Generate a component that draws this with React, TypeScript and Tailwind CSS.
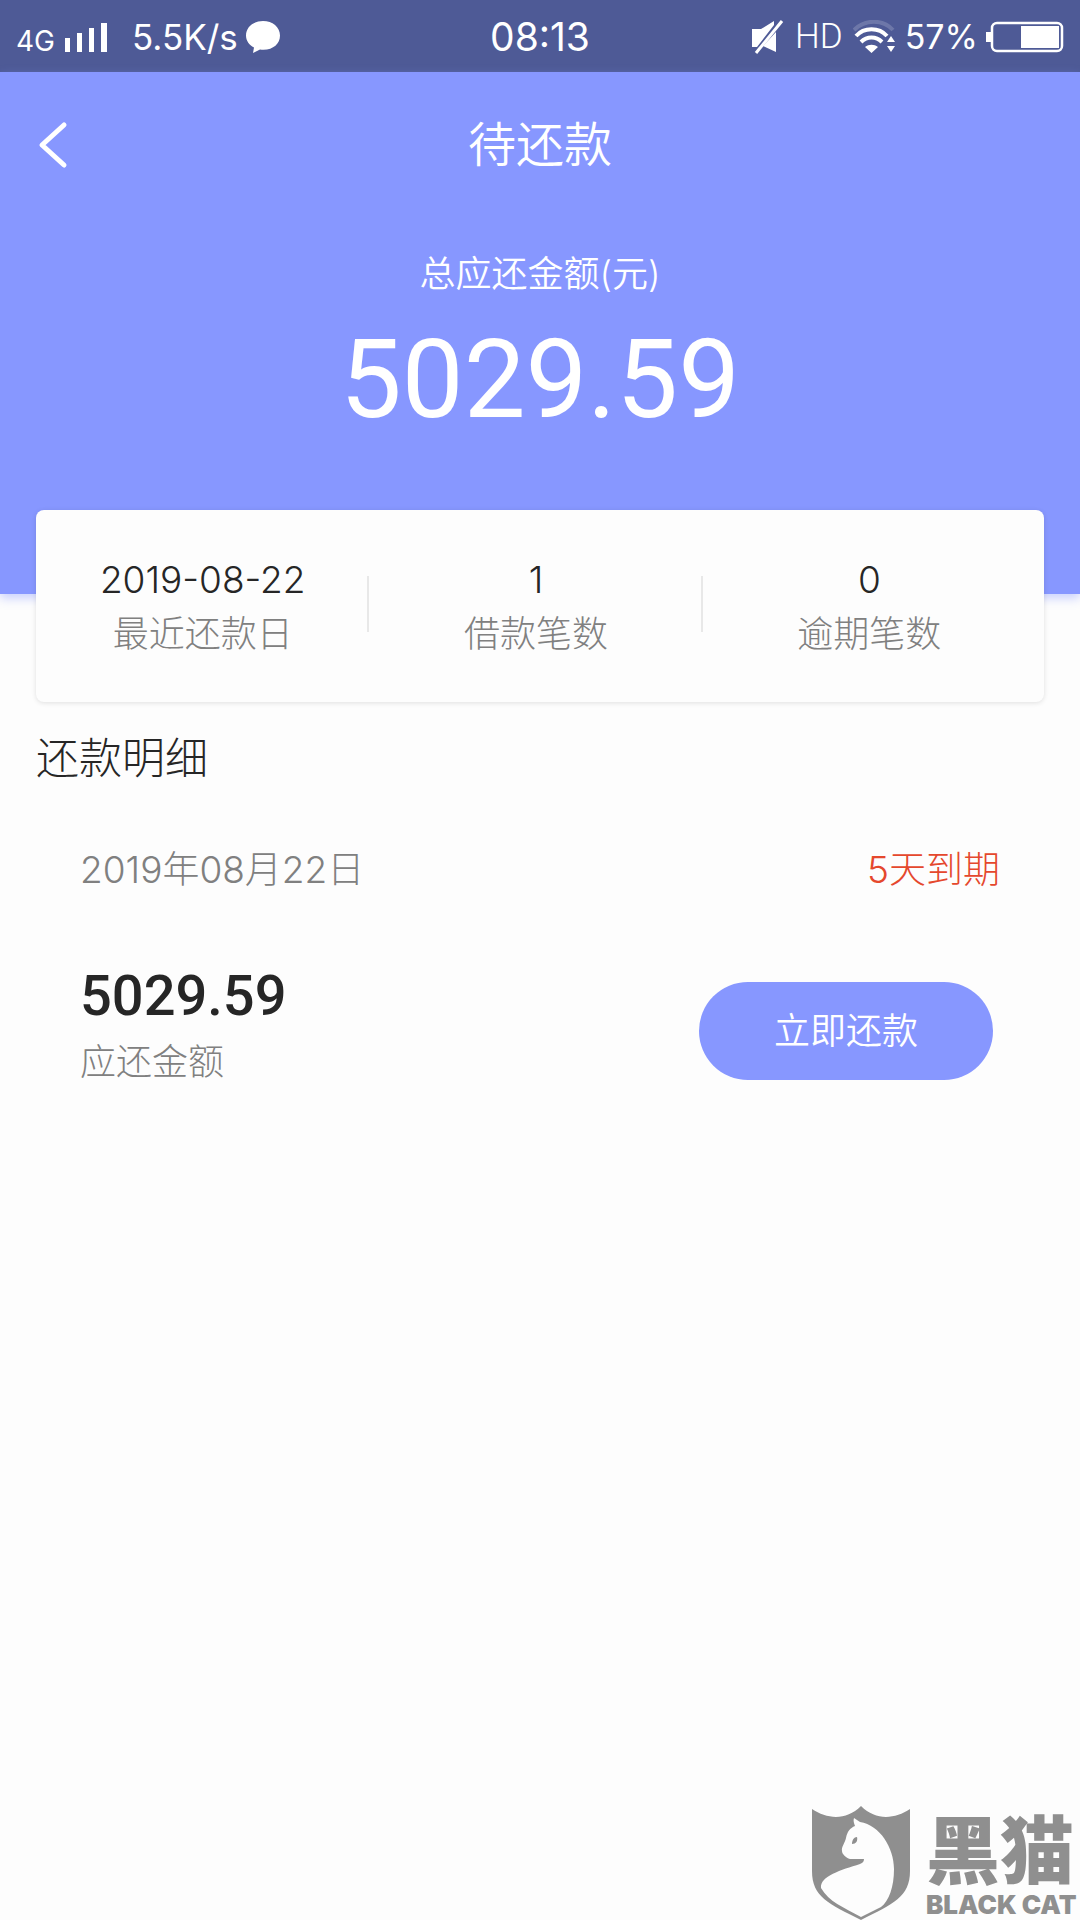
type Summary = { value: string; label: string };

const SUMMARY: Summary[] = [
  { value: "2019-08-22", label: "最近还款日" },
  { value: "1", label: "借款笔数" },
  { value: "0", label: "逾期笔数" },
];

export default function App() {
  return (
    <div className="flex min-h-screen flex-col bg-[#fdfdfd] font-['Inter','Noto_Sans_CJK_SC',sans-serif] font-light text-[#262626]">
      <StatusBar />
      <header className="h-[522px] bg-[#8797ff] font-[350] text-white shadow-[0_4px_10px_rgba(135,151,255,0.45)]">
        <nav className="grid grid-cols-[1fr_auto_1fr] items-center px-9 pt-10">
          <button type="button" aria-label="返回" className="w-12 py-2">
            <svg viewBox="0 0 32 50" className="h-[50px] w-8" fill="none" stroke="currentColor" strokeWidth="5" strokeLinecap="round" strokeLinejoin="round">
              <path d="M28 5 6 25l22 20" />
            </svg>
          </button>
          <h1 className="text-5xl leading-[64px]">待还款</h1>
        </nav>
        <p className="mt-[70px] text-center text-4xl leading-[52px]">总应还金额(元)</p>
        <p className="mt-6 text-center font-['Roboto',sans-serif] text-[110px] leading-[112px] font-normal">
          5029.59
        </p>
      </header>

      <main className="-mt-[84px]">
        <section className="mx-9 flex h-48 items-center rounded-lg bg-[#fdfdfd] pr-2 shadow-[0_1px_5px_rgba(0,0,0,0.12)]">
          {SUMMARY.map((s) => (
            <SummaryItem key={s.label} {...s} />
          ))}
        </section>

        <h2 className="mt-6 px-9 text-[43px] leading-[64px]">还款明细</h2>

        <section className="px-20 pt-[54px]">
          <div className="flex items-center justify-between text-[37px] leading-[52px]">
            <time dateTime="2019-08-22" className="text-[#808080]">
              2019年08月22日
            </time>
            <span className="text-[#e5482d]">5天到期</span>
          </div>
          <div className="mt-16 flex items-end justify-between pr-[7px]">
            <div>
              <p className="font-['Roboto',sans-serif] text-[56px] leading-[72px] font-medium">5029.59</p>
              <p className="mt-1 text-4xl leading-[52px] text-[#808080]">应还金额</p>
            </div>
            <button
              type="button"
              className="mb-2 h-[98px] w-[294px] rounded-full bg-[#8797ff] text-4xl font-[350] text-white"
            >
              立即还款
            </button>
          </div>
        </section>
      </main>

      <Watermark />
    </div>
  );
}

function SummaryItem({ value, label }: Summary) {
  return (
    <div className="relative flex-1 text-center after:absolute after:top-6 after:right-0 after:h-14 after:w-0.5 after:bg-[#e8e8e8] last:after:hidden">
      <p className="text-[37px] leading-[56px]">{value}</p>
      <p className="text-4xl leading-[52px] text-[#808080]">{label}</p>
    </div>
  );
}

function StatusBar() {
  return (
    <div className="grid h-[72px] grid-cols-[1fr_auto_1fr] items-center bg-[#4e5a96] px-4 pt-0.5 text-[35px] leading-[40px] font-normal text-white">
      <div className="flex items-center">
        <span className="pt-2 text-[28px] leading-8">4G</span>
        <svg viewBox="0 0 43 32" className="ml-2.5 h-8 w-[43px]" fill="currentColor">
          <path d="M0 17h5v14H0zM12 12h5v19h-5zM24 7h5v24h-5zM36 2h6v29h-6z" />
        </svg>
        <span className="ml-6">5.5K/s</span>
        <svg viewBox="0 0 34 32" className="ml-2 h-8 w-[34px]" fill="currentColor">
          <path d="M17 0C7.500 0 0 6 0 14.500c0 5 3 9.500 8 12L7 32l7-3.500c12 1.500 20-5 20-14C34 6 26.500 0 17 0z" />
        </svg>
      </div>
      <span className="text-[39px]">08:13</span>
      <div className="flex items-center justify-end">
        <svg viewBox="0 0 34 34" className="h-[34px] w-[34px]" fill="currentColor">
          <path d="M1 9h9L23 1v4L6 27H1z" />
          <path d="M25 12v20l-13-6z" />
          <path d="M31 1 5 33" stroke="currentColor" strokeWidth="3" />
        </svg>
        <span className="ml-2.5 font-['Roboto',sans-serif] font-light">HD</span>
        <svg viewBox="0 0 44 34" className="ml-2.5 h-[34px] w-11" fill="none" stroke="currentColor">
          <path d="M1 10C12-1 30-1 40 10" strokeWidth="4" opacity=".18" />
          <path d="M3 16c8-9 23-9 31 0M8 22c6-6 15-6 21 0" strokeWidth="4" />
          <path d="m12 27 6.500 6 6.500-6c-4-3-9-3-13 0zM34 22l4-6 4 6zM34 26h8l-4 6z" fill="currentColor" stroke="none" />
        </svg>
        <span className="ml-2 text-[34px]">57%</span>
        <svg viewBox="0 0 78 32" className="ml-2 h-8 w-[78px]" fill="none" stroke="currentColor">
          <rect x="6" y="2" width="70" height="28" rx="5" strokeWidth="2.500" />
          <path d="M2.500 11v10" strokeWidth="5" />
          <path d="M35 5h38v22H35z" fill="currentColor" stroke="none" />
        </svg>
      </div>
    </div>
  );
}

function Watermark() {
  return (
    <footer className="mt-auto flex items-end justify-end gap-4 text-[#8f8f8f]">
      <svg viewBox="0 0 98 114" className="h-[114px] w-[98px]" fill="currentColor">
        <path d="M0 3c15 10 34 12 49-3 15 15 34 13 49 3v62c0 26-17 33-49 49C17 98 0 91 0 65z" />
        <path
          fill="#fdfdfd"
          d="M42 12l6 4C68 19 82 42 82 63c0 18-5 32-13 38l-20 10C31 101 17 96 9 82c-1-12 20-18 39-24 3-1 4-3 4-5H38c-4-1-8-5-8-8-1-4 3-8 4-13 1-6 4-10 9-12-1-3-2-5-1-8z"
        />
        <path d="M40 38c0-4 2-7 5-7 1 4-1 7-5 7z" />
      </svg>
      <div className="w-[154px] font-black">
        <p className="font-['Noto_Sans_CJK_SC',sans-serif] text-[74px] leading-[72px] whitespace-nowrap">黑猫</p>
        <p className="mt-2 font-['Inter',sans-serif] text-[26px] leading-[30px] whitespace-nowrap">BLACK CAT</p>
      </div>
    </footer>
  );
}
